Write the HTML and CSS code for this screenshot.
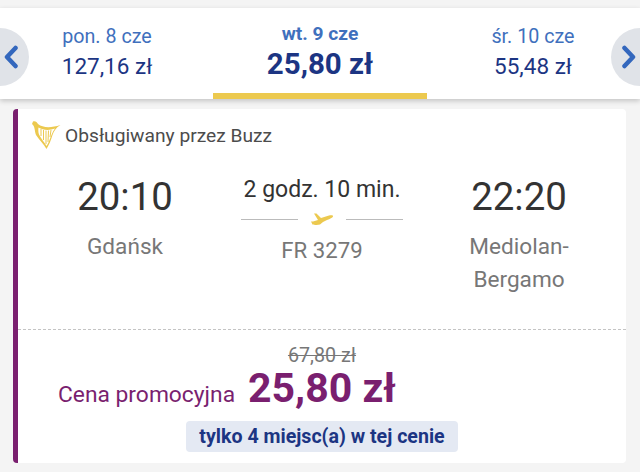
FILE: index.html
```html
<!DOCTYPE html>
<html>
<head>
  <meta charset="UTF-8">
  <title>Loty</title>
  <link rel="stylesheet" href="styles.css">
</head>
<body>
  <div class="dates">
    <div class="side">
      <div class="arrow arrow-left">
        <svg width="16" height="24" viewBox="0 0 16 24"><path d="M12.500 3 L4 12 L12.500 21" fill="none" stroke="#3367bd" stroke-width="4.500" stroke-linecap="round" stroke-linejoin="round"/></svg>
      </div>
      <div class="day">
        <div class="day-name">pon. 8 cze</div>
        <div class="day-price">127,16 zł</div>
      </div>
    </div>
    <div class="day day-active">
      <div class="day-name">wt. 9 cze</div>
      <div class="day-price">25,80 zł</div>
    </div>
    <div class="side side-right">
      <div class="day">
        <div class="day-name">śr. 10 cze</div>
        <div class="day-price">55,48 zł</div>
      </div>
      <div class="arrow arrow-right">
        <svg width="16" height="24" viewBox="0 0 16 24"><path d="M3.500 3 L12 12 L3.500 21" fill="none" stroke="#3367bd" stroke-width="4.500" stroke-linecap="round" stroke-linejoin="round"/></svg>
      </div>
    </div>
  </div>

  <div class="card">
    <div class="operator">
      <svg class="harp" width="30" height="30" viewBox="0 0 30 30">
        <path d="M2 1.500 C4 0.500 6 2 7 4 C12 8 20 8 29.500 5 C25 7.500 23 11 21.500 15 C20 20 18 25 15.500 29 C13 24 8 20 5 15 C3.500 11 4 6 1 4 Z" fill="#ecc94f"/>
        <path d="M7.500 7.500 C12 10.500 19 10.500 24 8.500 C21.500 11.500 20 16 18.500 20 C17.500 22.500 16.500 24.500 15.500 26 C13.500 22.500 10 18.500 8 14.500 C7.200 12 7.200 9.500 7.500 7.500 Z" fill="#fff"/>
        <path d="M10 9 L10 16 M12.500 10 L12.500 20 M15 10.500 L15 24 M17.500 10.500 L17 22 M20 10 L19 17" fill="none" stroke="#ecc94f" stroke-width="1"/>
      </svg>
      <span>Obsługiwany przez Buzz</span>
    </div>

    <div class="flight">
      <div class="stop">
        <div class="time">20:10</div>
        <div class="city">Gdańsk</div>
      </div>
      <div class="route">
        <div class="duration">2 godz. 10 min.</div>
        <div class="route-line">
          <span class="line"></span>
          <svg width="24" height="13" viewBox="0 0 24 13"><path d="M4 0.500 L6.500 0.500 L11 5 L19 2.500 C21.500 1.800 23.500 2.500 23 3.500 C22.500 4.800 20 5.800 17 7 L13 9 L10 11.500 C8 12.200 4 12 2.500 11.500 L1 8.500 L3 8.500 L8 7 Z" fill="#ecc94f"/></svg>
          <span class="line"></span>
        </div>
        <div class="flight-no">FR 3279</div>
      </div>
      <div class="stop">
        <div class="time">22:20</div>
        <div class="city">Mediolan-<br>Bergamo</div>
      </div>
    </div>

    <div class="price-box">
      <div class="old-price">67,80 zł</div>
      <div class="price-row">
        <span class="price-label">Cena promocyjna</span>
        <span class="price">25,80 zł</span>
      </div>
      <div class="seats">tylko 4 miejsc(a) w tej cenie</div>
    </div>
  </div>
</body>
</html>
```
FILE: styles.css
```css
body {
  font-family: Roboto, "Liberation Sans", sans-serif;
  background: #f4f4f4;
  margin: 0;
  padding-top: 8px;
  height: 464px;
  overflow: hidden;
}

.dates {
  display: flex;
  height: 91px;
  background: #fff;
  box-shadow: 0 2px 5px rgba(0,0,0,0.2);
}
.side {
  display: flex;
  width: 213px;
}
.side-right {
  justify-content: flex-end;
}
.arrow {
  height: 58px;
  margin-top: 20px;
  background: #e0e3e8;
  display: flex;
  align-items: center;
}
.arrow-left {
  border-radius: 0 29px 29px 0;
  padding-left: 3px;
  width: 26px;
}
.arrow-right {
  border-radius: 29px 0 0 29px;
  padding-left: 10px;
  width: 19px;
}
.day {
  width: 156px;
  text-align: center;
  padding-top: 16px;
}
.day-name {
  color: #3f70bd;
  font-size: 19.7px;
  line-height: 26px;
}
.day-price {
  color: #1c3583;
  font-size: 22.5px;
  line-height: 31px;
  padding-top: 1px;
}
.day-active {
  width: 214px;
  height: 91px;
  box-sizing: border-box;
  border-bottom: 6px solid #ecc94f;
  padding-top: 13px;
}
.day-active .day-name {
  font-size: 19.2px;
  font-weight: 700;
  line-height: 25px;
}
.day-active .day-price {
  font-size: 29.5px;
  font-weight: 700;
  line-height: 34px;
}

.card {
  margin: 10px 14px 0 13px;
  height: 354px;
  background: #fff;
  border-left: 5px solid #7a1f6f;
  border-radius: 4px;
}
.operator {
  display: flex;
  align-items: center;
  gap: 4px;
  padding: 11px 0 0 13px;
  color: #4c4c4c;
  font-size: 19.2px;
}
.harp {
  flex: none;
}

.flight {
  display: grid;
  grid-template-columns: 214px 180px 214px;
  margin-top: 18px;
  height: 156px;
  text-align: center;
}
.stop {
  padding-top: 4px;
}
.time {
  font-size: 38.4px;
  line-height: 50px;
  color: #333;
}
.city {
  font-size: 22.6px;
  line-height: 33px;
  color: #777;
  margin-top: 8px;
}
.route {
  padding-top: 7px;
}
.duration {
  font-size: 23px;
  line-height: 30px;
  color: #333;
}
.route-line {
  display: flex;
  align-items: center;
  justify-content: center;
  gap: 12px;
  margin-top: 5px;
  height: 18px;
}
.line {
  width: 57px;
  height: 1px;
  background: #bbb;
}
.flight-no {
  font-size: 22.2px;
  line-height: 30px;
  color: #777;
  margin-top: 7px;
}

.price-box {
  border-top: 1px dashed #c4c4c4;
  display: flex;
  flex-direction: column;
  align-items: center;
  margin-top: 5px;
  padding-top: 15px;
}
.old-price {
  font-size: 19.7px;
  line-height: 22px;
  color: #777;
  text-decoration: line-through;
}
.price-row {
  display: flex;
  align-items: baseline;
  gap: 13px;
  align-self: flex-start;
  margin-left: 40px;
  line-height: 42px;
}
.price-label {
  font-size: 22.8px;
  color: #7a1f6f;
}
.price {
  font-size: 41px;
  font-weight: 700;
  color: #7a1f6f;
}
.seats {
  margin-top: 5px;
  padding: 0 13px;
  height: 31px;
  line-height: 31px;
  background: #e4e9f3;
  border-radius: 4px;
  color: #1c3583;
  font-size: 19.6px;
  font-weight: 700;
}
```
